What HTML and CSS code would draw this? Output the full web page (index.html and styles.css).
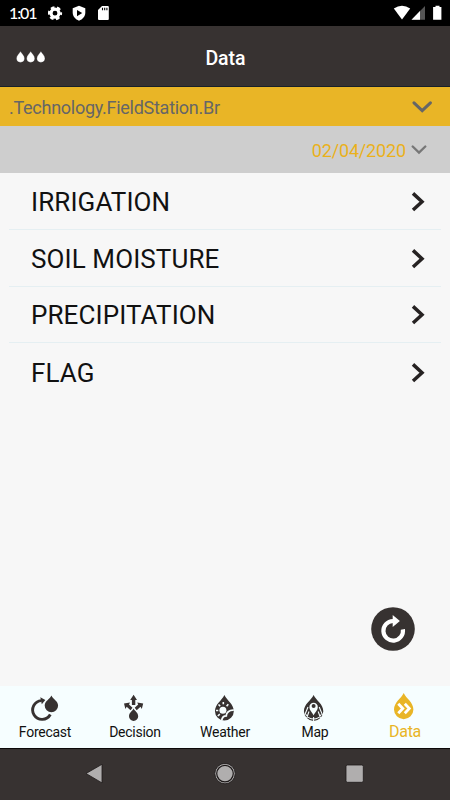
FILE: index.html
```html
<!DOCTYPE html>
<html lang="en">
<head>
    <meta charset="utf-8">
    <title>Data</title>
    <link rel="stylesheet" href="styles.css">
</head>
<body>
    <div class="status">
        <span class="time">1:01</span>
        <svg class="status-left" width="64" height="16" viewBox="48 5 64 16">
            <circle cx="55" cy="13.2" r="4" fill="none" stroke="#fff" stroke-width="3.2"/>
            <circle cx="55" cy="13.2" r="5.9" fill="none" stroke="#fff" stroke-width="2.400" stroke-dasharray="3.600 2.580" stroke-dashoffset="1.800"/>
            <path d="M79 5.8l6.3 2.4v4.6c0 3.6-2.7 6.6-6.3 7.9-3.600-1.300-6.300-4.300-6.300-7.900V8.200z" fill="#fff"/>
            <path d="M77 10v6.200l5.200-3.100z" fill="#000"/>
            <path d="M102 6h5.800q1 0 1 1v12q0 1-1 1h-8.800q-1 0-1-1V10z" fill="#fff"/>
            <path d="M102.500 7.800v2.500M104.700 7.800v2.500M106.900 7.800v2.500" stroke="#000" stroke-width="1.100"/>
        </svg>
        <svg class="status-right" width="50" height="16" viewBox="393 5 50 16">
            <path d="M393.800 8.600q8.200-5.800 16.400 0L402 19.600z" fill="#fff"/>
            <path d="M425 6v13.700h-13.500z" fill="#555"/>
            <path d="M420 11.100v8.600h-8.500z" fill="#fff"/>
            <path d="M435.500 5.800h4v1.300h1.900v12.600h-8.300V7.100h2.400z" fill="#fff"/>
        </svg>
    </div>
    <div class="header">
        <svg class="drops" width="30" height="12" viewBox="0 0 30 12">
            <g fill="#fff" stroke="#161212" stroke-width=".3">
                <path d="M4.500.3c1 2 4.100 4.300 4.100 7a4.100 4.100 0 0 1-8.200 0c0-2.700 3.100-5 4.100-7z"/>
                <path d="M14.700.3c1 2 4.100 4.300 4.100 7a4.100 4.100 0 0 1-8.200 0c0-2.700 3.100-5 4.100-7z"/>
                <path d="M24.900.3c1 2 4.100 4.300 4.100 7a4.100 4.100 0 0 1-8.200 0c0-2.700 3.100-5 4.100-7z"/>
            </g>
        </svg>
        <h1>Data</h1>
    </div>
    <div class="station">
        <span>.Technology.FieldStation.Br</span>
        <svg width="20" height="12" viewBox="0 0 20 12"><path d="M2 1.800L10.200 9.600l8.200-7.800" fill="none" stroke="#666" stroke-width="3" stroke-linecap="round"/></svg>
    </div>
    <div class="date">
        <span>02/04/2020</span>
        <svg width="16" height="10" viewBox="0 0 16 10"><path d="M1.700 1.500L8 7.600l6.300-6.100" fill="none" stroke="#777" stroke-width="2.300" stroke-linecap="round"/></svg>
    </div>
    <div class="list">
        <div class="row">
            <span>IRRIGATION</span>
            <svg class="arrow" width="14" height="20" viewBox="0 0 14 20"><path d="M2 1.400l9 8.300L2 18"/></svg>
        </div>
        <div class="row">
            <span>SOIL MOISTURE</span>
            <svg class="arrow" width="14" height="20" viewBox="0 0 14 20"><path d="M2 1.400l9 8.300L2 18"/></svg>
        </div>
        <div class="row">
            <span>PRECIPITATION</span>
            <svg class="arrow" width="14" height="20" viewBox="0 0 14 20"><path d="M2 1.400l9 8.300L2 18"/></svg>
        </div>
        <div class="row">
            <span>FLAG</span>
            <svg class="arrow" width="14" height="20" viewBox="0 0 14 20"><path d="M2 1.400l9 8.300L2 18"/></svg>
        </div>
    </div>
    <button class="refresh">
        <svg width="44" height="44" viewBox="0 0 44 44">
            <circle cx="22" cy="22" r="21.800" fill="#373231"/>
            <path d="M31.900 22.400A9.800 9.800 0 1 1 22 14" fill="none" stroke="#fff" stroke-width="4.200"/>
            <path d="M21.700 8l7.200 6-7.200 6z" fill="#fff"/>
        </svg>
    </button>
    <div class="tabs">
        <div class="tab">
            <svg width="32" height="30" viewBox="29 693 32 30">
                <path d="M50.300 714.500A9.400 9.400 0 1 1 41.500 700.600" fill="none" stroke="#373231" stroke-width="2.900"/>
                <path d="M40.300 697.300l5 2.800-3.500 4.200z" fill="#373231"/>
                <path d="M51.400 695.600c1.400 3.500 6.700 5.500 6.700 10a6.700 6.700 0 0 1-13.400 0c0-4.500 5.300-6.500 6.700-10z" fill="#373231"/>
            </svg>
            <span>Forecast</span>
        </div>
        <div class="tab">
            <svg width="32" height="30" viewBox="119 693 32 30">
                <g fill="#373231">
                    <path d="M133.600 708.500c1 2.500 4.600 4 4.600 7.700a4.600 4.800 0 0 1-9.200 0c0-3.700 3.600-5.200 4.600-7.700z"/>
                    <path d="M133.600 694.700l3.400 5.300h-1.700v5h-3.400v-5h-1.700z"/>
                    <path d="M124 703.500l6-1-1 2 3.500 3.300-2 2.400-3.800-3.400-1.300 2.200z"/>
                    <path d="M143.200 703.500l-6-1 1 2-3.500 3.300 2 2.400 3.800-3.400 1.300 2.200z"/>
                </g>
            </svg>
            <span>Decision</span>
        </div>
        <div class="tab">
            <svg width="32" height="30" viewBox="208 693 32 30">
                <path d="M223.400 695c2.500 5.500 9.400 9 9.400 16.200a9.400 9.400 0 0 1-18.800 0c0-7.200 6.900-10.700 9.400-16.200z" fill="#373231"/>
                <g stroke="#f6feff" stroke-width="1.600" fill="none">
                    <path d="M222.300 702v2.300M217.500 704.500l1.700 1.700M227.300 704.200l-1.700 2M215 710.500h2.300M216.800 716l2-1.800"/>
                    <path d="M220.700 720.500c.4-3 2-4.600 4.500-4.600 0-3.300 3-6 7.600-5.700" stroke-width="1.800"/>
                </g>
                <circle cx="221.900" cy="710.300" r="3.500" fill="#f6feff"/>
                <path d="M230.500 718.500l3 2-6 1z" fill="#f6feff"/>
            </svg>
            <span>Weather</span>
        </div>
        <div class="tab">
            <svg width="32" height="30" viewBox="299 693 32 30">
                <path d="M313.600 695c2.500 5.500 9.700 9 9.700 16.200a9.700 9.700 0 0 1-19.400 0c0-7.200 7.200-10.700 9.700-16.200z" fill="#373231"/>
                <g fill="none" stroke="#f6feff" stroke-width="1.100">
                    <path d="M308 707l-3.500 8.500M319.200 707l3.500 8.500M309 711.500l-2.500 7M318.200 711.500l2.500 7M306 714.500q2.500 4.500 7.600 4.500t7.600-4.500M313.600 717v4"/>
                </g>
                <path d="M313.600 715.500c-1-3-4.200-5-4.200-8.600a4.200 4.200 0 0 1 8.400 0c0 3.600-3.200 5.600-4.200 8.600z" fill="#f6feff"/>
                <circle cx="313.600" cy="706" r="2" fill="#373231"/>
            </svg>
            <span>Map</span>
        </div>
        <div class="tab active">
            <svg width="32" height="30" viewBox="389 693 32 30">
                <path d="M403.700 693c2.500 5.600 9.700 9.200 9.700 16.500a9.700 9.700 0 0 1-19.400 0c0-7.300 7.200-10.900 9.700-16.500z" fill="#e9b526"/>
                <path d="M398.300 703.700l4.500 4.800-4.500 4.800M404.800 703.700l4.500 4.800-4.500 4.800" fill="none" stroke="#fff" stroke-width="2.800"/>
            </svg>
            <span>Data</span>
        </div>
    </div>
    <div class="navbar">
        <svg width="450" height="51" viewBox="0 749 450 51">
            <g fill="#b0aeae" stroke="#1c1818" stroke-width=".8">
                <path d="M86 773.500l16-9.200v18.600z"/>
                <circle cx="225" cy="773.600" r="10.200"/>
                <circle cx="225" cy="773.600" r="8.300" stroke-width="1.200"/>
                <rect x="346" y="765" width="17.300" height="17.300" rx="1.500"/>
            </g>
        </svg>
    </div>
</body>
</html>
```
FILE: styles.css
```css
* {
    box-sizing: border-box;
}
body {
    display: flex;
    flex-direction: column;
    height: 800px;
    margin: 0;
    overflow: hidden;
    position: relative;
    background: #f7f7f7;
    font-family: Roboto, "Liberation Sans", sans-serif;
    color: #111;
}
svg {
    display: block;
    flex-shrink: 0;
}
.status {
    display: flex;
    align-items: center;
    height: 26px;
    padding: 0 7px 0 9px;
    background: #000;
    color: #fff;
}
.time {
    width: 39px;
    font-family: Lato, Roboto, sans-serif;
    font-size: 16px;
    font-weight: 500;
    letter-spacing: -1.1px;
    line-height: 26px;
}
.status-right {
    margin-left: auto;
}
.header {
    display: grid;
    grid-template-columns: 1fr auto 1fr;
    align-items: center;
    height: 61px;
    padding: 2px 15px 0 16px;
    background: #373231;
    border-bottom: 1px solid #17212a;
}
.header h1 {
    margin: 0;
    padding-top: 2px;
    color: #fff;
    font-size: 19.5px;
    font-weight: 500;
}
.station {
    display: flex;
    justify-content: space-between;
    align-items: center;
    height: 39px;
    padding: 1px 18px 0 9px;
    background: #e9b526;
    color: #666;
    font-size: 18px;
    letter-spacing: -0.27px;
}
.date {
    display: flex;
    justify-content: flex-end;
    align-items: center;
    gap: 5px;
    height: 47px;
    padding: 1px 23px 0 0;
    background: #cecece;
    color: #eab11b;
    font-size: 18px;
    letter-spacing: -0.15px;
}
.list {
    flex: 1;
    padding: 0 9px;
}
.row {
    display: flex;
    justify-content: space-between;
    align-items: center;
    height: 56.8px;
    padding: 2px 16px 0 22px;
    border-bottom: 1px solid #e5eff2;
    font-size: 26px;
    letter-spacing: 0.1px;
}
.row:last-child {
    border-bottom: none;
}
.arrow {
    fill: none;
    stroke: #262222;
    stroke-width: 3.5;
}
.refresh {
    position: absolute;
    right: 35px;
    bottom: 149px;
    padding: 0;
    border: none;
    background: none;
}
.tabs {
    display: flex;
    height: 62px;
    background: #f6feff;
}
.tab {
    display: flex;
    flex: 1;
    flex-direction: column;
    align-items: center;
    padding-top: 7px;
    font-size: 14px;
    letter-spacing: -0.25px;
    line-height: 18px;
}
.active {
    color: #e9b526;
    font-size: 16px;
    line-height: 17px;
}
.navbar {
    height: 52px;
    background: #373231;
    border-top: 1px solid #0c0909;
}
```
